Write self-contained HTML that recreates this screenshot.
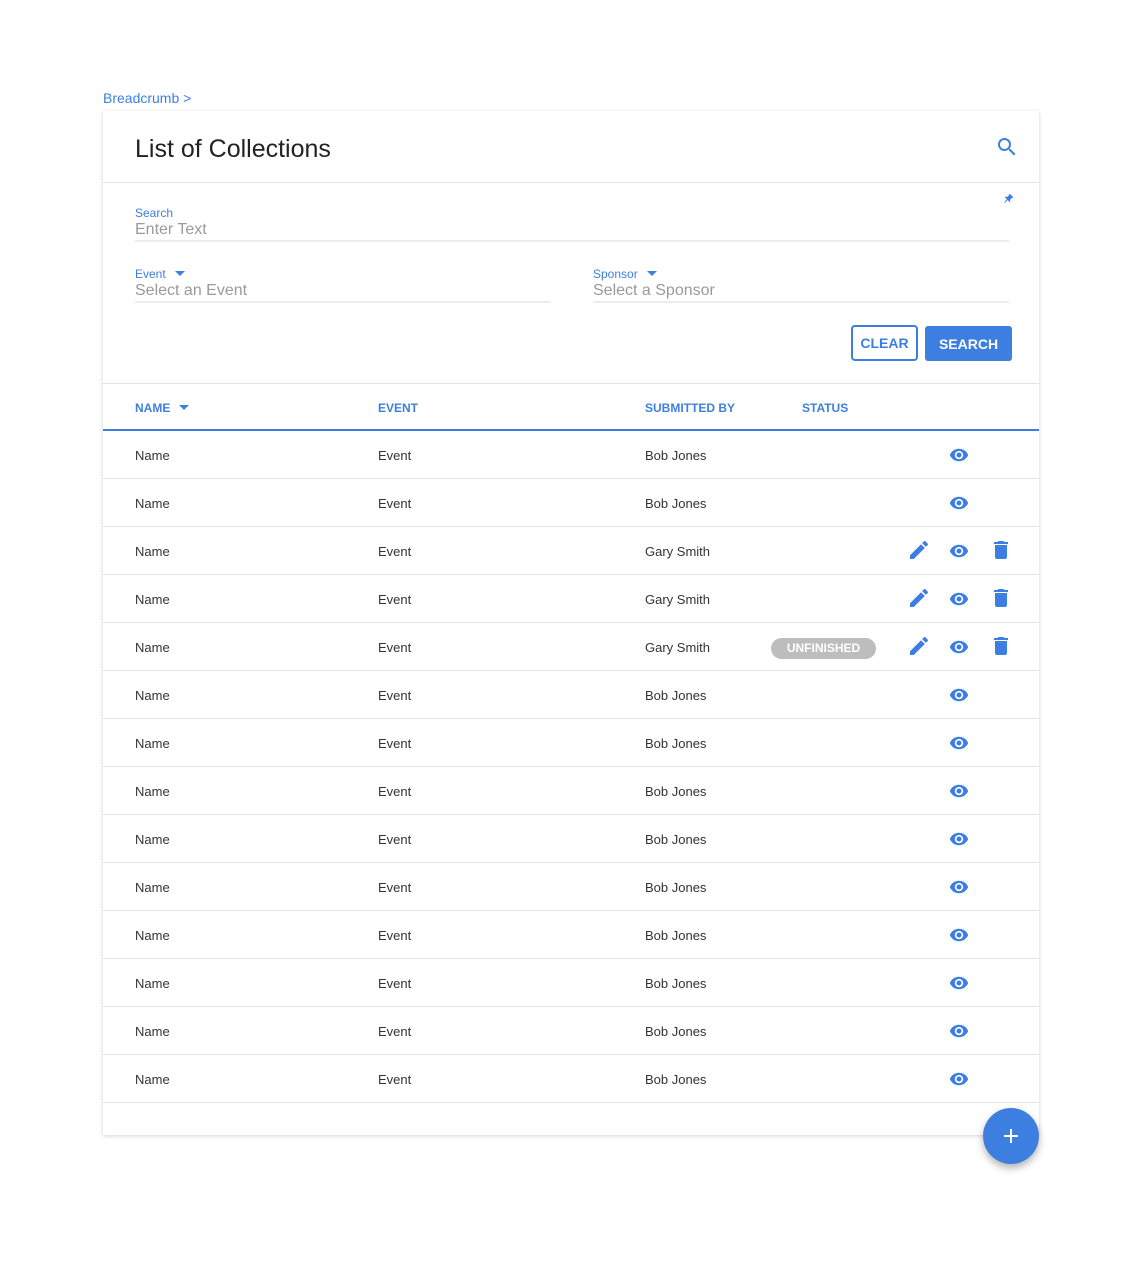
<!DOCTYPE html>
<html><head><meta charset="utf-8"><style>
*{box-sizing:border-box;margin:0;padding:0}
body{width:1141px;height:1288px;background:#fff;font-family:"Liberation Sans",sans-serif;position:relative;overflow:hidden;color:#333}
.a{position:absolute}
.blue{color:#3d7fe0}
.card{position:absolute;left:103px;top:111px;width:936px;height:1024px;background:#fff;box-shadow:0 1px 4px rgba(0,0,0,.18)}
.line{position:absolute;left:0;width:936px;height:1px;background:#e3e3e3}
.lbl{font-size:12px;color:#3d7fe0}
.ph{font-size:16px;color:#9a9a9a}
.ul{height:2px;background:#ececec}
.th{font-size:12px;font-weight:bold;color:#3d7fe0}
.td{font-size:13px;color:#333}
</style></head><body>
<div class="a blue" style="left:103px;top:90px;font-size:14px">Breadcrumb &gt;</div>
<div class="card">
<div class="a" style="left:32px;top:24px;font-size:25px;color:#222">List of Collections</div>
<svg class="a" style="left:892px;top:24px" width="24" height="24" viewBox="0 0 24 24"><path fill="#3d7fe0" d="M15.5 14h-.79l-.28-.27A6.47 6.47 0 0 0 16 9.5 6.5 6.5 0 1 0 9.5 16c1.61 0 3.090-.59 4.23-1.57l.27.28v.79l5 4.99L20.49 19l-4.99-5zm-6 0C7.01 14 5 11.99 5 9.5S7.01 5 9.5 5 14 7.01 14 9.5 11.99 14 9.5 14z"/></svg>
<div class="line" style="top:71px"></div>
<svg class="a" style="left:899px;top:82px" width="12" height="12" viewBox="0 0 24 24"><path fill="#3d7fe0" transform="rotate(45 12 12)" d="M16 9V4h1V2H7v2h1v5c0 1.66-1.34 3-3 3v2h5.970v7l1 1 1-1v-7H19v-2c-1.66 0-3-1.34-3-3z"/></svg>
<div class="a lbl" style="left:32px;top:95px">Search</div>
<div class="a ph" style="left:32px;top:110px">Enter Text</div>
<div class="a ul" style="left:32px;top:129px;width:874px"></div>
<div class="a lbl" style="left:32px;top:156px">Event <span style="display:inline-block;margin-left:6px;border-left:5px solid transparent;border-right:5px solid transparent;border-top:5px solid #3d7fe0;vertical-align:2px"></span></div>
<div class="a ph" style="left:32px;top:171px">Select an Event</div>
<div class="a ul" style="left:32px;top:190px;width:416px"></div>
<div class="a lbl" style="left:490px;top:156px">Sponsor <span style="display:inline-block;margin-left:6px;border-left:5px solid transparent;border-right:5px solid transparent;border-top:5px solid #3d7fe0;vertical-align:2px"></span></div>
<div class="a ph" style="left:490px;top:171px">Select a Sponsor</div>
<div class="a ul" style="left:490px;top:190px;width:416px"></div>
<div class="a" style="left:748px;top:214px;width:67px;height:36px;border:2px solid #3d7fe0;border-radius:4px;color:#3d7fe0;font-size:14px;font-weight:bold;text-align:center;line-height:33px">CLEAR</div>
<div class="a" style="left:822px;top:215px;width:87px;height:35px;background:#3d7fe0;border-radius:3px;color:#fff;font-size:14px;font-weight:bold;text-align:center;line-height:36px">SEARCH</div>
<div class="line" style="top:272px"></div>
<div class="a th" style="left:32px;top:290px">NAME <span style="display:inline-block;margin-left:5px;border-left:5px solid transparent;border-right:5px solid transparent;border-top:5px solid #3d7fe0;vertical-align:2px"></span></div>
<div class="a th" style="left:275px;top:290px">EVENT</div>
<div class="a th" style="left:542px;top:290px">SUBMITTED BY</div>
<div class="a th" style="left:699px;top:290px">STATUS</div>
<div class="a" style="left:0;top:318px;width:936px;height:2px;background:#3d7fe0"></div>
<div id="rows"></div>
</div>
<div class="a" style="left:983px;top:1108px;width:56px;height:56px;border-radius:50%;background:#3d7fe0;box-shadow:0 4px 8px rgba(0,0,0,.3)">
<div class="a" style="left:21px;top:27px;width:14px;height:2px;background:#fff"></div>
<div class="a" style="left:27px;top:21px;width:2px;height:14px;background:#fff"></div>
</div>
<script>
var eye='<svg width="20" height="20" viewBox="0 0 24 24"><path fill="#3d7fe0" d="M12 4.5C7 4.5 2.73 7.61 1 12c1.73 4.39 6 7.5 11 7.5s9.27-3.11 11-7.5c-1.73-4.39-6-7.5-11-7.5zM12 17c-2.76 0-5-2.240-5-5s2.24-5 5-5 5 2.24 5 5-2.24 5-5 5zm0-8c-1.66 0-3 1.34-3 3s1.34 3 3 3 3-1.34 3-3-1.34-3-3-3z"/></svg>';
var pen='<svg width="24" height="24" viewBox="0 0 24 24"><path fill="#3d7fe0" d="M3 17.25V21h3.75L17.81 9.94l-3.75-3.75L3 17.25zM20.71 7.04a1 1 0 0 0 0-1.41l-2.34-2.34a1 1 0 0 0-1.41 0l-1.83 1.83 3.75 3.75 1.83-1.83z"/></svg>';
var del='<svg width="24" height="24" viewBox="0 0 24 24"><path fill="#3d7fe0" d="M6 19c0 1.1.9 2 2 2h8c1.1 0 2-.9 2-2V7H6v12zM19 4h-3.5l-1-1h-5l-1 1H5v2h14V4z"/></svg>';
var h='';
for(var i=0;i<14;i++){var t=320+i*48;var g=(i>=2&&i<=4);
h+='<div class="a td" style="left:32px;top:'+(t+17)+'px">Name</div><div class="a td" style="left:275px;top:'+(t+17)+'px">Event</div><div class="a td" style="left:542px;top:'+(t+17)+'px">'+(g?'Gary Smith':'Bob Jones')+'</div>';
h+='<div class="a" style="left:846px;top:'+(t+14)+'px">'+eye+'</div>';
if(g){h+='<div class="a" style="left:804px;top:'+(t+11)+'px">'+pen+'</div><div class="a" style="left:886px;top:'+(t+11)+'px">'+del+'</div>';}
if(i==4)h+='<div class="a" style="left:668px;top:'+(t+15)+'px;width:105px;height:21px;border-radius:11px;background:#bdbdbd;color:#fff;font-size:12px;font-weight:bold;text-align:center;line-height:21px">UNFINISHED</div>';
h+='<div class="line" style="top:'+(t+47)+'px"></div>';}
document.getElementById('rows').innerHTML=h;
</script>
</body></html>
